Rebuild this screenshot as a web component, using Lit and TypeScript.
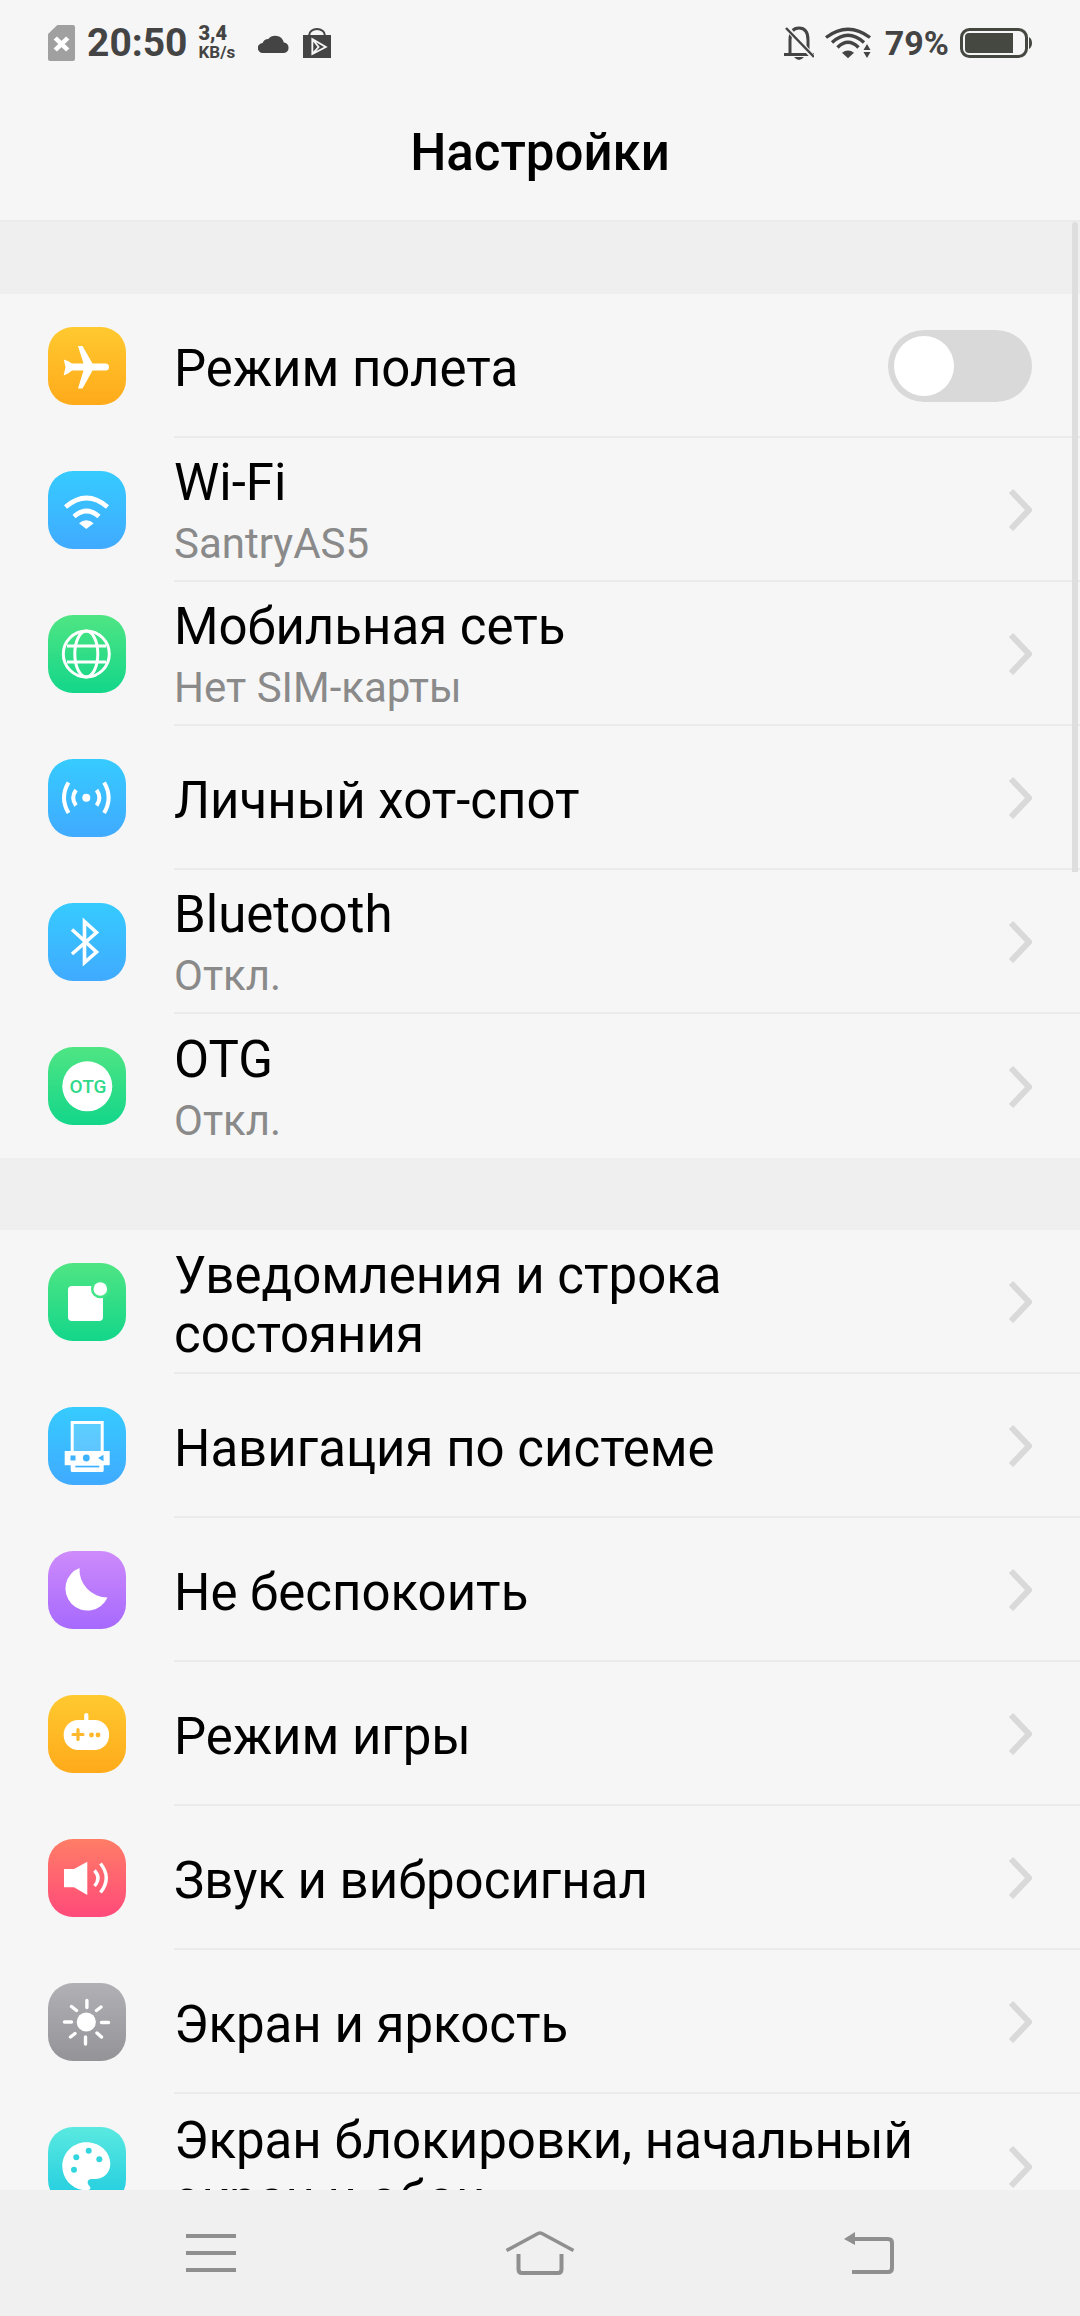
import { LitElement, html, css, svg } from 'lit';
import { customElement } from 'lit/decorators.js';

// app tile icons, all drawn on a 78x78 grid
const tileIcons: Record<string, unknown> = {
  plane: svg`<path fill="#fff" d="M57.5 36.5A3.5 3.5 0 0 1 57.5 43.5H44.5L34.5 61.5H30L35.5 43.5H24L20 46.5L15.7 48.5L17.5 40L15.7 32.5L20 34L24 36.5H35.5L30 19H34.5L44.5 36.5Z"/>`,
  wifi: svg`<g fill="none" stroke="#fff" stroke-width="4.6"><path d="M17.5 36Q38.5 18 59.5 36"/><path d="M26 45.5Q38.5 34.5 51 45.5"/></g><path fill="#fff" d="M31 52.3Q38.3 46.3 45.7 52.3L38.3 58Z"/>`,
  globe: svg`<g fill="none" stroke="#fff" stroke-width="3"><circle cx="38.3" cy="39" r="23"/><ellipse cx="38.3" cy="39" rx="11.5" ry="23"/><path d="M19 31H58M19 47H58"/></g>`,
  hotspot: svg`<circle cx="38.3" cy="38.7" r="4" fill="#fff"/><g fill="none" stroke="#fff" stroke-width="4"><path d="M20.5 23.5Q11.5 38.7 20.5 54"/><path d="M28 31Q22.5 38.7 28 46.5"/><path d="M56.1 23.5Q65.1 38.7 56.1 54"/><path d="M48.6 31Q54.1 38.7 48.6 46.5"/></g>`,
  bluetooth: svg`<path fill="none" stroke="#fff" stroke-width="3.6" d="M24 26.5L48.5 49L36.5 59.5V18.5L48.5 29.5L24 51"/>`,
  otg: svg`<circle cx="39.3" cy="39.3" r="25" fill="#fff"/><text x="40" y="46" text-anchor="middle" font-family="Roboto, sans-serif" font-weight="500" font-size="19" fill="#2fd98a">OTG</text>`,
  notify: svg`<rect x="20" y="23" width="35" height="35" rx="4" fill="#fff"/><circle cx="52.3" cy="26" r="9.3" fill="#43e488"/><circle cx="52.3" cy="26" r="6.8" fill="#fff"/>`,
  nav: svg`<rect x="24.2" y="15.5" width="30" height="30" fill="#fff" fill-opacity=".18" stroke="#fff" stroke-width="3"/><path fill="#fff" d="M16.7 44H61.7V58.3H55.7V63.5Q55.7 65 54 65H24.4Q22.7 65 22.7 63.5V58.3H16.7Z"/><rect x="22.5" y="48.5" width="5" height="5" fill="#3fb2ff"/><circle cx="38.3" cy="51" r="3.4" fill="#3fb2ff"/><path fill="#3fb2ff" d="M50 51L55.5 47.7V54.3Z"/><rect x="27.3" y="58.7" width="24" height="1.7" fill="#3fb2ff"/>`,
  moon: svg`<path fill="#fff" d="M31.5 17A22 22 0 1 0 59.5 46.5A28 28 0 0 1 31.5 17Z"/>`,
  game: svg`<rect x="15.7" y="25" width="45.4" height="30" rx="14.5" fill="#fff"/><rect x="36.2" y="18" width="4.2" height="9" rx="2" fill="#fff"/><path stroke="#ffb72b" stroke-width="3.2" stroke-linecap="round" d="M30 34.5V44.5M25 39.5H35"/><circle cx="43.5" cy="40" r="2.4" fill="#ffb72b"/><circle cx="50" cy="40" r="2.4" fill="#ffb72b"/>`,
  sound: svg`<path fill="#fff" d="M16 30H26L39.3 22.7V56L26 48.3H16Z"/><g fill="none" stroke="#fff" stroke-width="3.4"><path d="M46.5 31.5Q53.5 39 46.5 47"/><path d="M52.5 24.5Q64 39 52.5 53.5"/></g>`,
  sun: svg`<circle cx="38.3" cy="39" r="9.6" fill="#fff"/><path stroke="#fff" stroke-width="3.4" stroke-linecap="round" d="M38.9 17.5V24.5M37.5 54V61M16.5 39H23.5M53.5 39.5H60.5M23.5 23.5L28.5 27.5M48.5 27.5L53 24M22.5 54L27 50.5M49 50L53.5 54"/>`,
  palette: svg`<path fill="#fff" d="M38.3 15.3C52 15.3 62.3 25 62.3 37C62.3 46 55 52 47 52H43.5C39.5 52 38.5 56 41 58.5C44 61.5 42 63.3 38.3 63.3C25 63.3 14.3 52.5 14.3 39.3C14.3 26 25 15.3 38.3 15.3Z"/><g fill="#33d6df"><circle cx="28.3" cy="30.3" r="3"/><circle cx="40.7" cy="23.7" r="3"/><circle cx="51.3" cy="32.3" r="3"/><circle cx="26" cy="42.7" r="3"/></g>`,
};

interface Row {
  icon: string;
  tint: string;
  title: string;
  sub?: string;
  toggle?: boolean;
}

const firstGroup: Row[] = [
  { icon: 'plane', tint: 'orange', title: 'Режим полета', toggle: true },
  { icon: 'wifi', tint: 'blue', title: 'Wi-Fi', sub: 'SantryAS5' },
  { icon: 'globe', tint: 'green', title: 'Мобильная сеть', sub: 'Нет SIM-карты' },
  { icon: 'hotspot', tint: 'blue', title: 'Личный хот-спот' },
  { icon: 'bluetooth', tint: 'blue', title: 'Bluetooth', sub: 'Откл.' },
  { icon: 'otg', tint: 'green', title: 'OTG', sub: 'Откл.' },
];

const secondGroup: Row[] = [
  { icon: 'notify', tint: 'green', title: 'Уведомления и строка состояния' },
  { icon: 'nav', tint: 'blue', title: 'Навигация по системе' },
  { icon: 'moon', tint: 'purple', title: 'Не беспокоить' },
  { icon: 'game', tint: 'orange', title: 'Режим игры' },
  { icon: 'sound', tint: 'red', title: 'Звук и вибросигнал' },
  { icon: 'sun', tint: 'gray', title: 'Экран и яркость' },
  { icon: 'palette', tint: 'teal', title: 'Экран блокировки, начальный экран и обои' },
];

@customElement('app-root')
export class AppRoot extends LitElement {
  static styles = css`
    :host {
      display: block;
      font-family: Roboto, "Noto Sans", sans-serif;
    }

    .screen {
      position: relative;
      display: flex;
      flex-direction: column;
      width: 1080px;
      height: 2316px;
      overflow: hidden;
      background: #f6f6f6;
    }

    .status {
      display: flex;
      align-items: center;
      height: 88px;
      box-sizing: border-box;
      padding: 0 48px 2px 48px;
      color: #444;
      flex: none;
    }

    .status svg {
      display: block;
      flex: none;
    }

    .time {
      font-size: 39px;
      font-weight: 700;
      margin-left: 12px;
    }

    .speed {
      display: flex;
      flex-direction: column;
      width: 37px;
      font-weight: 700;
      line-height: 19px;
      margin-left: 11px;
      font-size: 17px;
    }

    .speed b {
      font-size: 20px;
    }

    .cloud {
      margin-left: 22px;
    }

    .bag {
      margin-left: 14px;
    }

    .bell {
      margin-left: auto;
    }

    .wifi-s {
      margin-left: 11px;
    }

    .pct {
      font-size: 34px;
      font-weight: 700;
      margin-left: 14px;
    }

    .batt {
      margin-left: 11px;
    }

    .title {
      flex: none;
      height: 132px;
      line-height: 130px;
      text-align: center;
      font-size: 51px;
      font-weight: 500;
      color: #000;
      border-bottom: 2px solid #ebebeb;
    }

    .list {
      flex: 1;
      min-height: 0;
      overflow: hidden;
    }

    .gap {
      height: 72px;
      background: #efefef;
    }

    .row {
      display: flex;
      align-items: center;
      height: 144px;
    }

    .tile {
      width: 78px;
      height: 78px;
      margin: 0 48px 0 48px;
      border-radius: 25px;
      flex: none;
    }

    .tile svg {
      display: block;
    }

    .orange { background: linear-gradient(#ffc92f, #ffaa1a); }
    .blue { background: linear-gradient(#36cbff, #40aaff); }
    .green { background: linear-gradient(#4fe583, #13d68a); }
    .purple { background: linear-gradient(#cd8bfb, #a669fd); }
    .red { background: linear-gradient(#ff7d66, #ff4a7a); }
    .gray { background: linear-gradient(#b0b0b5, #939398); }
    .teal { background: linear-gradient(#5ae9e0, #1ecbe0); }

    .body {
      flex: 1;
      min-width: 0;
      height: 100%;
      display: flex;
      align-items: center;
      box-sizing: border-box;
      border-bottom: 2px solid #ebebeb;
    }

    .row:last-child .body,
    .row:has(+ .gap) .body {
      border-bottom: none;
    }

    .text {
      flex: 1;
      min-width: 0;
      margin-top: 7px;
    }

    .text:has(.sub) {
      margin-top: 4px;
    }

    .label {
      font-size: 51px;
      line-height: 59px;
      color: #000;
      padding-right: 60px;
    }

    .sub {
      font-size: 42px;
      line-height: 50px;
      color: #8a8a8a;
      margin-top: 7px;
    }

    .chev {
      flex: none;
      margin: 2px 48px 0 0;
    }

    .switch {
      flex: none;
      width: 144px;
      height: 72px;
      margin: 2px 48px 0 0;
      padding: 6px;
      box-sizing: border-box;
      border-radius: 36px;
      background: #d9d9d9;
    }

    .knob {
      width: 60px;
      height: 60px;
      border-radius: 50%;
      background: #fff;
    }

    .nav {
      flex: none;
      height: 126px;
      display: flex;
      align-items: center;
      justify-content: space-between;
      padding: 0 186px;
      background: #f0f0f0;
    }

    .nav svg {
      display: block;
    }

    .thumb {
      position: absolute;
      top: 222px;
      right: 2px;
      width: 6px;
      height: 650px;
      border-radius: 3px 3px 0 0;
      background: #dedede;
    }
  `;

  renderRow(row: Row) {
    return html`
      <div class="row">
        <div class="tile ${row.tint}">
          <svg width="78" height="78" viewBox="0 0 78 78">${tileIcons[row.icon]}</svg>
        </div>
        <div class="body">
          <div class="text">
            <div class="label">${row.title}</div>
            ${row.sub ? html`<div class="sub">${row.sub}</div>` : ''}
          </div>
          ${row.toggle
            ? html`<div class="switch"><div class="knob"></div></div>`
            : html`<svg class="chev" width="24" height="42" viewBox="0 0 24 42">
                <path d="M3 2L21 21L3 40" fill="none" stroke="#d9d9d9" stroke-width="6" />
              </svg>`}
        </div>
      </div>
    `;
  }

  render() {
    return html`
      <div class="screen">
        <div class="status">
          <svg width="27" height="36" viewBox="0 0 26 36" preserveAspectRatio="none">
            <path fill="#a0a0a0" d="M9 0H24Q26 0 26 2V34Q26 36 24 36H2Q0 36 0 34V9Z" />
            <path stroke="#fff" stroke-width="4.5" d="M7 13L19 25M19 13L7 25" />
          </svg>
          <span class="time">20:50</span>
          <div class="speed"><b>3,4</b><span>KB/s</span></div>
          <svg class="cloud" width="31" height="20" viewBox="0 0 30 20" preserveAspectRatio="none">
            <path fill="#444" d="M5 20A5 5 0 0 1 4.500 10A6 6 0 0 1 10 6A8.500 8.500 0 0 1 25 9.500A5.300 5.300 0 0 1 25 20Z" />
          </svg>
          <svg class="bag" width="28" height="30" viewBox="0 0 27 30" preserveAspectRatio="none">
            <path fill="#444" d="M0 7H27V30H0Z" />
            <path fill="none" stroke="#444" stroke-width="2" d="M6 10V7A7.500 6 0 0 1 21 7V10" />
            <path fill="none" stroke="#f6f6f6" stroke-width="1.800" d="M9 11V26L22 19ZM9 11L15 19L9 26" />
          </svg>
          <svg class="bell" width="30" height="35" viewBox="0 0 30 35">
            <path fill="none" stroke="#444" stroke-width="3" d="M6 27V14Q6 2 15 2Q24 2 24 14V27" />
            <path fill="#444" d="M0 27H30V30H0ZM10 31H20Q15 37 10 31Z" />
            <path stroke="#f6f6f6" stroke-width="5" d="M4 3L29 31" />
            <path stroke="#444" stroke-width="2.500" d="M2 2L30 31" />
          </svg>
          <svg class="wifi-s" width="46" height="32" viewBox="0 0 46 32">
            <g fill="none" stroke="#444" stroke-width="3.400">
              <path d="M1 10.500Q23 -6 45 10.500" />
              <path d="M7 15.500Q23 1 39 15.500" />
              <path d="M12.500 20.500Q23 10 33.500 20.500" />
            </g>
            <path fill="#444" d="M17 25.700Q23 21.500 29 25.700L23 31.300Z" />
            <path fill="#444" d="M42 17L45.500 23H38.500ZM38.500 25H45.500L42 31Z" />
          </svg>
          <span class="pct">79%</span>
          <svg class="batt" width="72" height="30" viewBox="0 0 72 30">
            <rect x="1.500" y="1.500" width="65" height="27" rx="8" fill="none" stroke="#444840" stroke-width="3" />
            <path fill="#444840" d="M5 9Q5 5 9 5H53V25H9Q5 25 5 21Z" />
            <path fill="#444840" d="M69 9Q72 11 72 15Q72 19 69 21Z" />
          </svg>
        </div>
        <div class="title">Настройки</div>
        <div class="list">
          <div class="gap"></div>
          ${firstGroup.map((r) => this.renderRow(r))}
          <div class="gap"></div>
          ${secondGroup.map((r) => this.renderRow(r))}
        </div>
        <div class="nav">
          <svg width="50" height="38" viewBox="0 0 50 38">
            <path stroke="#8f8f8f" stroke-width="4" d="M0 2H50M0 19H50M0 36H50" />
          </svg>
          <svg width="70" height="44" viewBox="0 0 70 44">
            <path fill="none" stroke="#8f8f8f" stroke-width="3.500" d="M1.500 19.500L33 2.500Q35 1.500 37 2.500L68.500 19.500" />
            <path fill="none" stroke="#8f8f8f" stroke-width="4" d="M13.500 23V38Q13.500 42 17 42H53Q56.500 42 56.500 38V23" />
          </svg>
          <svg width="50" height="42" viewBox="0 0 50 42">
            <path fill="#8f8f8f" d="M0 7L11 0V13Z" />
            <path fill="none" stroke="#8f8f8f" stroke-width="4" d="M8 7H44Q48 7 48 11V36Q48 40 44 40H8" />
          </svg>
        </div>
        <div class="thumb"></div>
      </div>
    `;
  }
}
